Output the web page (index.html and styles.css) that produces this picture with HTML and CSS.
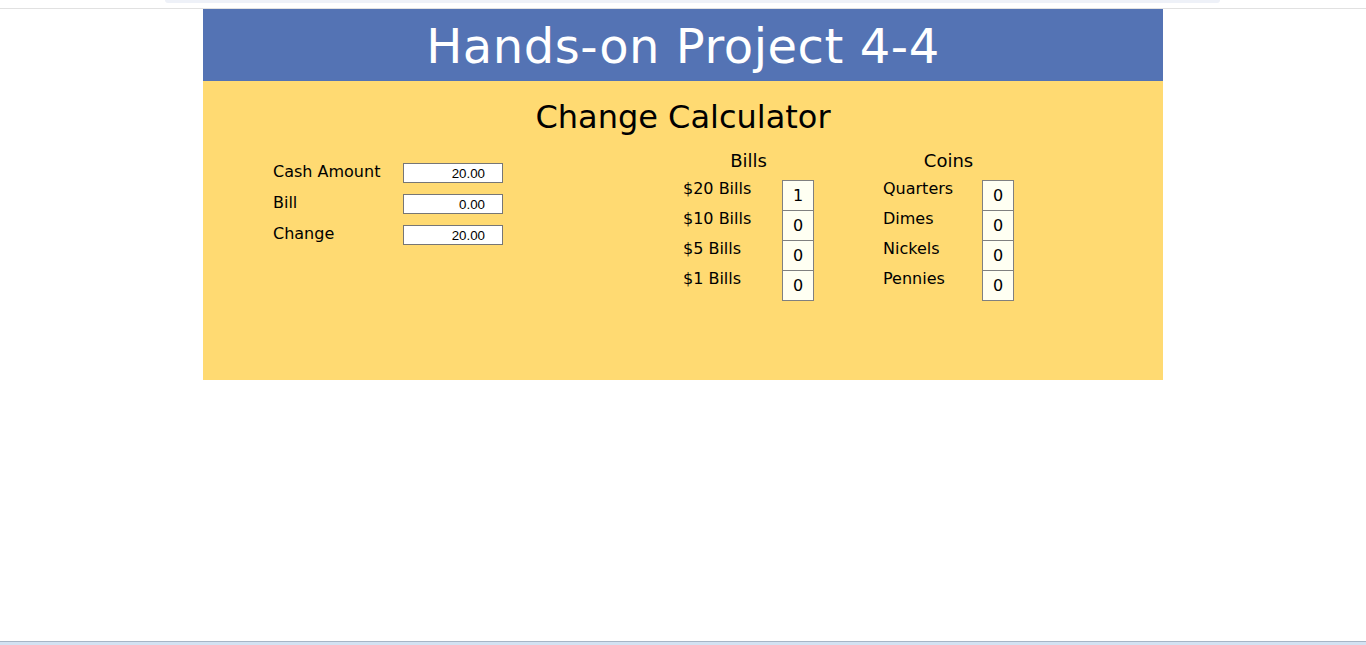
FILE: index.html
```html
<!DOCTYPE html>
<html lang="en">
<head>
<meta charset="utf-8">
<title>Hands-on Project 4-4</title>
<link rel="stylesheet" href="styles.css">
</head>
<body>
<div class="app">
  <div class="chrome-top"><div class="chrome-tab"></div></div>
  <div class="page">
    <header class="banner">
      <h1>Hands-on Project 4-4</h1>
    </header>
    <section class="calc">
      <h2>Change Calculator</h2>
      <div class="calc-body">
        <div class="amounts">
          <label class="amt-label" for="cash">Cash Amount</label>
          <input class="amt-input" id="cash" type="text" value="20.00">
          <label class="amt-label" for="bill">Bill</label>
          <input class="amt-input" id="bill" type="text" value="0.00">
          <label class="amt-label" for="change">Change</label>
          <input class="amt-input" id="change" type="text" value="20.00">
        </div>
        <div class="money">
          <div class="money-col">
            <h3>Bills</h3>
            <div class="money-grid">
              <span class="money-label">$20 Bills</span><output class="money-box">1</output>
              <span class="money-label">$10 Bills</span><output class="money-box">0</output>
              <span class="money-label">$5 Bills</span><output class="money-box">0</output>
              <span class="money-label">$1 Bills</span><output class="money-box">0</output>
            </div>
          </div>
          <div class="money-col">
            <h3>Coins</h3>
            <div class="money-grid">
              <span class="money-label">Quarters</span><output class="money-box">0</output>
              <span class="money-label">Dimes</span><output class="money-box">0</output>
              <span class="money-label">Nickels</span><output class="money-box">0</output>
              <span class="money-label">Pennies</span><output class="money-box">0</output>
            </div>
          </div>
        </div>
      </div>
    </section>
  </div>
  <div class="spacer"></div>
  <div class="chrome-bottom"></div>
</div>
</body>
</html>
```
FILE: styles.css
```css
* { box-sizing: border-box; }

html, body {
  margin: 0;
  padding: 0;
  background: #ffffff;
}

body {
  font-family: "DejaVu Sans", Verdana, sans-serif;
  color: #000;
}

.app {
  min-height: 100vh;
  display: flex;
  flex-direction: column;
}

.chrome-top {
  height: 9px;
  border-bottom: 1px solid #e1e1e1;
  display: flex;
  justify-content: flex-start;
}

.chrome-tab {
  margin-left: 165px;
  width: 1055px;
  height: 3px;
  background: #eef1f8;
  border-radius: 0 0 4px 4px;
}

.page {
  width: 960px;
  margin: 0 auto;
}

.banner {
  background: #5473b4;
  height: 72px;
  padding-top: 2px;
}

.banner h1 {
  margin: 0;
  font-size: 48px;
  font-weight: normal;
  line-height: 70px;
  letter-spacing: 0.55px;
  color: #ffffff;
  text-align: center;
}

.calc {
  background: #ffda72;
  height: 299px;
  padding-top: 16px;
}

.calc h2 {
  margin: 0;
  font-size: 32px;
  font-weight: normal;
  line-height: 40px;
  text-align: center;
}

.calc-body {
  display: flex;
  margin-top: 13px;
}

.amounts {
  width: 480px;
  padding: 12px 0 0 70px;
  display: grid;
  grid-template-columns: 130px 100px;
  grid-auto-rows: 31px;
  align-items: start;
  align-content: start;
}

.amt-label {
  font-size: 16px;
  line-height: 20px;
}

.amt-input {
  margin: 1px 0 0;
  width: 100px;
  height: 20px;
  border: 1px solid #767676;
  border-radius: 0;
  background: #ffffff;
  padding: 0 17px 0 2px;
  font-family: "Liberation Sans", Arial, sans-serif;
  font-size: 13.33px;
  color: #000;
  text-align: right;
}

.money {
  display: flex;
  gap: 69px;
}

.money-col {
  width: 131px;
}

.money-col h3 {
  margin: 0 0 8px;
  font-size: 18px;
  font-weight: normal;
  line-height: 22px;
  text-align: center;
}

.money-grid {
  display: grid;
  grid-template-columns: 99px 32px;
  grid-auto-rows: 30px;
  align-items: start;
}

.money-label {
  font-size: 16px;
  line-height: 18px;
}

.money-box {
  display: block;
  width: 32px;
  height: 31px;
  border: 1px solid #808080;
  background: #fffff2;
  font-size: 16px;
  line-height: 30px;
  text-align: center;
  color: #000;
  overflow: hidden;
}

.spacer { flex: 1; }

.chrome-bottom {
  height: 4px;
  border-top: 1px solid #a7b5c6;
  background: #d3e2f2;
}
```
